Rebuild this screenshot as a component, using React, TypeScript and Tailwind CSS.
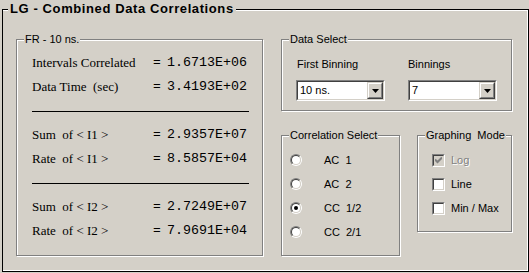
import type { ReactNode } from 'react';

const face = 'bg-[#d4d0c8]';

function Group({ label, className, children }: { label: string; className: string; children?: ReactNode }) {
  return (
    <div className={`relative shrink-0 border border-[#808080] shadow-[inset_1px_1px_0_#fff,1px_1px_0_#fff] ${className}`}>
      <span className={`absolute -top-[8px] left-[7px] ${face} px-[1px] text-[11px] leading-[14px] whitespace-pre`}>{label}</span>
      {children}
    </div>
  );
}

function Combo({ value }: { value: string }) {
  return (
    <div className="w-[89px] h-[21px] flex border border-t-[#808080] border-l-[#808080] border-b-white border-r-white">
      <div className="flex-1 flex border border-t-[#404040] border-l-[#404040] border-b-[#d4d0c8] border-r-[#d4d0c8] bg-white">
        <span className="flex-1 pl-[2px] text-[11px] leading-[17px]">{value}</span>
        <div className="w-[16px] h-[17px] flex border border-t-[#d4d0c8] border-l-[#d4d0c8] border-b-[#404040] border-r-[#404040]">
          <div className="flex-1 flex items-center justify-center bg-[#d4d0c8] border border-t-white border-l-white border-b-[#808080] border-r-[#808080]">
            <svg width="7" height="4" viewBox="0 0 7 4">
              <path d="M0 0H7L3.5 4Z" fill="#000" />
            </svg>
          </div>
        </div>
      </div>
    </div>
  );
}

function Radio({ label, checked }: { label: string; checked?: boolean }) {
  return (
    <div className="h-[24px] flex items-center">
      <div className="w-[12px] h-[12px] flex rounded-full border border-t-[#808080] border-l-[#808080] border-b-white border-r-white">
        <div className="flex-1 flex items-center justify-center rounded-full border border-t-[#404040] border-l-[#404040] border-b-[#d4d0c8] border-r-[#d4d0c8] bg-white">
          {checked && <div className="w-[4px] h-[4px] rounded-full bg-black" />}
        </div>
      </div>
      <span className="ml-[22px] text-[11px] leading-[14px] whitespace-pre">{label}</span>
    </div>
  );
}

function Check({ label, checked, disabled }: { label: string; checked?: boolean; disabled?: boolean }) {
  return (
    <div className="h-[24px] flex items-center">
      <div className="w-[13px] h-[13px] flex border border-t-[#808080] border-l-[#808080] border-b-white border-r-white">
        <div className={`flex-1 flex items-center justify-center border border-t-[#404040] border-l-[#404040] border-b-[#d4d0c8] border-r-[#d4d0c8] ${disabled ? 'bg-[#d4d0c8]' : 'bg-white'}`}>
          {checked && (
            <svg width="7" height="7" viewBox="0 0 7 7">
              <path d="M0 2.5L2.5 5L7 0.5" fill="none" stroke={disabled ? '#808080' : '#000'} strokeWidth="2" />
            </svg>
          )}
        </div>
      </div>
      <span className={`ml-[6px] text-[11px] leading-[14px] whitespace-pre ${disabled ? 'text-[#808080] [text-shadow:1px_1px_0_#fff]' : 'text-black'}`}>
        {label}
      </span>
    </div>
  );
}

const stats: ([string, string] | null)[] = [
  ['Intervals Correlated', '1.6713E+06'],
  ['Data Time  (sec)', '3.4193E+02'],
  null,
  ['Sum  of < I1 >', '2.9357E+07'],
  ['Rate  of < I1 >', '8.5857E+04'],
  null,
  ['Sum  of < I2 >', '2.7249E+07'],
  ['Rate  of < I2 >', '7.9691E+04'],
];

export default function App() {
  return (
    <div className={`w-[529px] h-[273px] ${face} pt-[9px] pl-[2px] text-black font-['Liberation_Sans',Arial,sans-serif] overflow-hidden`}>
      <div className="relative w-[527px] h-[263px] border border-black shadow-[inset_-1px_-1px_0_#fff,inset_0_1px_0_#fff] flex pl-[13px] pt-[29px]">
        <span className={`absolute -top-[10px] left-[5px] ${face} px-[2px] text-[13px] font-bold leading-[17px] tracking-[0.6px]`}>
          LG - Combined Data Correlations
        </span>

        {/* FR results */}
        <Group label="FR - 10 ns." className="w-[247px] h-[217px] pl-[15px] pt-[11px]">
          {stats.map((row, i) =>
            row ? (
              <div key={i} className="h-[24px] flex items-center">
                <span className="w-[121px] font-['Liberation_Serif',serif] text-[13px] whitespace-pre">{row[0]}</span>
                <span className="w-[14px] font-['Liberation_Mono',monospace] text-[13px]">=</span>
                <span className="font-['Liberation_Mono',monospace] text-[13.33px]">{row[1]}</span>
              </div>
            ) : (
              <div key={i} className="h-[24px] flex items-center">
                <div className="w-[217px] h-px bg-black" />
              </div>
            )
          )}
        </Group>

        <div className="ml-[18px] flex flex-col">
          <Group label="Data Select" className="w-[231px] h-[72px] pl-[14px] pt-[17px] flex">
            <div className="w-[112px] flex flex-col">
              <span className="pl-[1px] text-[11px] leading-[14px]">First Binning</span>
              <div className="mt-[9px]">
                <Combo value="10 ns." />
              </div>
            </div>
            <div className="flex flex-col">
              <span className="text-[11px] leading-[14px]">Binnings</span>
              <div className="mt-[9px]">
                <Combo value="7" />
              </div>
            </div>
          </Group>

          <div className="mt-[24px] flex items-start">
            <Group label="Correlation Select" className="w-[119px] h-[121px] pl-[8px] pt-[12px]">
              <Radio label="AC  1" />
              <Radio label="AC  2" />
              <Radio label="CC  1/2" checked />
              <Radio label="CC  2/1" />
            </Group>
            <Group label="Graphing  Mode" className="ml-[17px] w-[95px] h-[97px] pl-[14px] pt-[12px]">
              <Check label="Log" checked disabled />
              <Check label="Line" />
              <Check label="Min / Max" />
            </Group>
          </div>
        </div>
      </div>
    </div>
  );
}
